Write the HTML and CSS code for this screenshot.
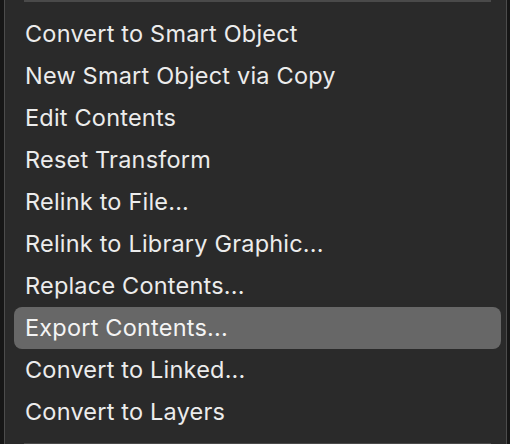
FILE: index.html
```html
<!DOCTYPE html>
<html>
<head>
<meta charset="utf-8">
<link rel="stylesheet" href="styles.css">
</head>
<body>
<div class="frame">
  <div class="menu">
    <div class="sep"></div>
    <ul class="items">
      <li class="item">Convert to Smart Object</li>
      <li class="item">New Smart Object via Copy</li>
      <li class="item">Edit Contents</li>
      <li class="item">Reset Transform</li>
      <li class="item">Relink to File...</li>
      <li class="item">Relink to Library Graphic...</li>
      <li class="item">Replace Contents...</li>
      <li class="item active">Export Contents...</li>
      <li class="item">Convert to Linked...</li>
      <li class="item">Convert to Layers</li>
    </ul>
    <div class="sep bottom"></div>
  </div>
</div>
</body>
</html>
```

FILE: styles.css
```css
html, body {
  margin: 0;
  padding: 0;
  background: #161616;
  width: 510px;
  height: 444px;
  overflow: hidden;
}
.frame {
  display: flex;
  height: 444px;
  padding-left: 4px;
  padding-right: 3px;
}
.menu {
  flex: 1;
  background: #2a2a2a;
  border-left: 1px solid #4c4c4c;
  border-right: 1px solid #4c4c4c;
  display: flex;
  flex-direction: column;
}
.sep {
  height: 2px;
  margin: 0 15px 0 19px;
  background: #4a4a4a;
}
.sep.bottom {
  margin-top: 10px;
}
.items {
  list-style: none;
  margin: 11px 0 0 0;
  padding: 0 5px 0 9px;
}
.item {
  height: 42px;
  line-height: 42px;
  padding-left: 11px;
  font-family: Inter, "Liberation Sans", sans-serif;
  font-size: 23.5px;
  letter-spacing: 0.2px;
  color: #ececec;
  border-radius: 8px;
  white-space: nowrap;
}
.item.active {
  background: #676767;
  color: #f4f4f4;
}
```
